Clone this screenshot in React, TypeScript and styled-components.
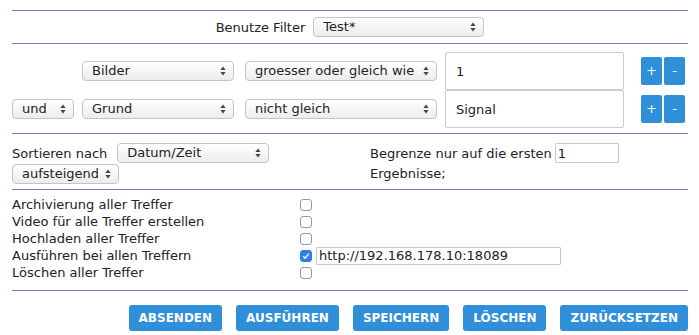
import styled, { createGlobalStyle } from "styled-components";

const GlobalStyle = createGlobalStyle`
  html, body {
    margin: 0;
    padding: 0;
    background: #ffffff;
  }
  body {
    font-family: "DejaVu Sans", Verdana, sans-serif;
    font-size: 13px;
    color: #222222;
  }
`;

const Page = styled.div`
  width: 699px;
  box-sizing: border-box;
  padding: 10px 11px 0 12px;
`;

const Rule = styled.hr`
  margin: 0;
  border: 0;
  border-top: 1px solid #7d7bb4;
  height: 0;
`;

const FilterBar = styled.div`
  height: 32px;
  display: flex;
  align-items: center;
  justify-content: center;
  gap: 8px;
`;

const SelectWrap = styled.div<{ $w: number }>`
  position: relative;
  width: ${(p) => p.$w}px;
  height: 20px;
  flex: none;
`;

const NativeSelect = styled.select`
  appearance: none;
  -webkit-appearance: none;
  width: 100%;
  height: 100%;
  box-sizing: border-box;
  margin: 0;
  padding: 0 20px 0 9px;
  border: 1px solid #c4c4c4;
  border-radius: 4px;
  background: linear-gradient(#ffffff, #ececec);
  font-family: inherit;
  font-size: 13px;
  color: #222222;
  line-height: 18px;
  outline: none;
`;

const Arrows = styled.svg`
  position: absolute;
  right: 8px;
  top: 5px;
  pointer-events: none;
`;

const Select = ({ w, value }: { w: number; value: string }) => (
  <SelectWrap $w={w}>
    <NativeSelect defaultValue={value}>
      <option>{value}</option>
    </NativeSelect>
    <Arrows width="6" height="10" viewBox="0 0 6 10">
      <path d="M3 0.5 L5.6 4 L0.4 4 Z" fill="#444" />
      <path d="M3 9.5 L5.6 6 L0.4 6 Z" fill="#444" />
    </Arrows>
  </SelectWrap>
);

const ConditionGrid = styled.div`
  display: grid;
  grid-template-columns: 70px 163px 200px 196px auto;
  padding: 8px 0 5px;
`;

const Cell = styled.div`
  height: 38px;
  display: flex;
  align-items: center;
`;

const ValueInput = styled.input`
  width: 179px;
  height: 38px;
  box-sizing: border-box;
  margin: 0;
  padding: 0 10px;
  border: 1px solid #cccccc;
  border-radius: 2px;
  font-family: inherit;
  font-size: 13px;
  color: #222222;
  outline: none;
`;

const PmGroup = styled.div`
  display: flex;
  gap: 2px;
`;

const PmButton = styled.button`
  width: 21px;
  height: 28px;
  padding: 0;
  border: 0;
  border-radius: 2px;
  background: #2f8fd9;
  color: #ffffff;
  font-family: inherit;
  font-size: 13px;
  line-height: 28px;
`;

const SortSection = styled.div`
  display: grid;
  grid-template-columns: 358px 1fr;
  padding: 9px 0 5px;
`;

const SortCol = styled.div`
  display: flex;
  flex-direction: column;
  gap: 1px;
`;

const Line = styled.div`
  display: flex;
  align-items: center;
  gap: 10px;
  height: 20px;
`;

const LimitLine = styled.div`
  display: flex;
  align-items: center;
  gap: 3px;
  height: 20px;
`;

const TextLine = styled.div`
  height: 20px;
  line-height: 20px;
`;

const SmallInput = styled.input<{ $w: number }>`
  width: ${(p) => p.$w}px;
  height: 20px;
  box-sizing: border-box;
  margin: 0;
  padding: 0 2px;
  border: 1px solid #c8c8c8;
  border-radius: 1px;
  font-family: inherit;
  font-size: 13px;
  color: #222222;
  outline: none;
`;

const ActionList = styled.div`
  padding: 6px 0 9px;
`;

const ActionRow = styled.div`
  display: flex;
  align-items: center;
  height: 17px;
`;

const ActionLabel = styled.span`
  width: 288px;
  flex: none;
`;

const CheckBox = styled.span<{ $on?: boolean }>`
  width: 12px;
  height: 12px;
  box-sizing: border-box;
  border-radius: 3px;
  border: 1px solid ${(p) => (p.$on ? "#2f7fe4" : "#9a9a9a")};
  background: ${(p) => (p.$on ? "#2f7fe4" : "#ffffff")};
  display: flex;
  align-items: center;
  justify-content: center;
  flex: none;
`;

const UrlInput = styled.input`
  width: 245px;
  height: 18px;
  box-sizing: border-box;
  margin: 0 0 0 4px;
  padding: 0 2px;
  border: 1px solid #c8c8c8;
  border-radius: 1px;
  font-family: inherit;
  font-size: 13px;
  color: #222222;
  outline: none;
`;

const ButtonBar = styled.div`
  display: flex;
  justify-content: flex-end;
  gap: 14px;
  padding-top: 14px;
`;

const ActionButton = styled.button`
  height: 26px;
  padding: 0 10px;
  border: 0;
  border-radius: 3px;
  background: #2f8fd9;
  color: #ffffff;
  font-family: inherit;
  font-size: 12px;
  font-weight: bold;
`;

const actions = [
  { label: "Archivierung aller Treffer" },
  { label: "Video für alle Treffer erstellen" },
  { label: "Hochladen aller Treffer" },
  { label: "Ausführen bei allen Treffern", on: true, url: "http://192.168.178.10:18089" },
  { label: "Löschen aller Treffer" },
];

export default function App() {
  return (
    <Page>
      <GlobalStyle />
      <Rule />
      <FilterBar>
        <span>Benutze Filter</span>
        <Select w={171} value="Test*" />
      </FilterBar>
      <Rule />
      <ConditionGrid>
        <Cell />
        <Cell>
          <Select w={152} value="Bilder" />
        </Cell>
        <Cell>
          <Select w={192} value="groesser oder gleich wie" />
        </Cell>
        <Cell>
          <ValueInput defaultValue="1" />
        </Cell>
        <Cell>
          <PmGroup>
            <PmButton>+</PmButton>
            <PmButton>-</PmButton>
          </PmGroup>
        </Cell>
        <Cell>
          <Select w={62} value="und" />
        </Cell>
        <Cell>
          <Select w={152} value="Grund" />
        </Cell>
        <Cell>
          <Select w={192} value="nicht gleich" />
        </Cell>
        <Cell>
          <ValueInput defaultValue="Signal" />
        </Cell>
        <Cell>
          <PmGroup>
            <PmButton>+</PmButton>
            <PmButton>-</PmButton>
          </PmGroup>
        </Cell>
      </ConditionGrid>
      <Rule />
      <SortSection>
        <SortCol>
          <Line>
            <span>Sortieren nach</span>
            <Select w={152} value="Datum/Zeit" />
          </Line>
          <Line>
            <Select w={107} value="aufsteigend" />
          </Line>
        </SortCol>
        <SortCol>
          <LimitLine>
            <span>Begrenze nur auf die ersten</span>
            <SmallInput $w={64} defaultValue="1" />
          </LimitLine>
          <TextLine>Ergebnisse;</TextLine>
        </SortCol>
      </SortSection>
      <Rule />
      <ActionList>
        {actions.map((a) => (
          <ActionRow key={a.label}>
            <ActionLabel>{a.label}</ActionLabel>
            <CheckBox $on={a.on}>
              {a.on && (
                <svg width="8" height="8" viewBox="0 0 8 8">
                  <path d="M1.2 4.2 L3.2 6.2 L6.8 1.6" stroke="#fff" strokeWidth="1.4" fill="none" />
                </svg>
              )}
            </CheckBox>
            {a.url && <UrlInput defaultValue={a.url} />}
          </ActionRow>
        ))}
      </ActionList>
      <Rule />
      <ButtonBar>
        <ActionButton>ABSENDEN</ActionButton>
        <ActionButton>AUSFÜHREN</ActionButton>
        <ActionButton>SPEICHERN</ActionButton>
        <ActionButton>LÖSCHEN</ActionButton>
        <ActionButton>ZURÜCKSETZEN</ActionButton>
      </ButtonBar>
    </Page>
  );
}
